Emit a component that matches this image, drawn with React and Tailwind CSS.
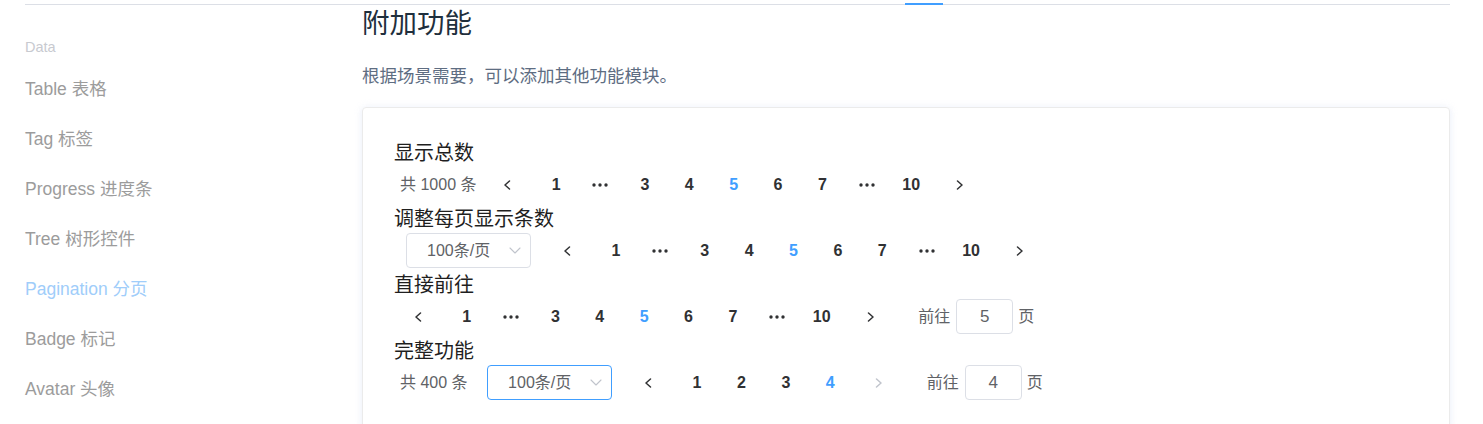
import React from "react";

const FONT = { fontFamily: '"Liberation Sans", "Noto Sans CJK SC", sans-serif' };

function ChevLeft({ color = "#303133" }) {
  return (
    <svg width="8" height="10" viewBox="0 0 8 10" fill="none">
      <polyline points="6.5,1 2,5 6.5,9" stroke={color} strokeWidth="1.5" strokeLinecap="round" strokeLinejoin="round" />
    </svg>
  );
}
function ChevRight({ color = "#303133" }) {
  return (
    <svg width="8" height="10" viewBox="0 0 8 10" fill="none">
      <polyline points="1.5,1 6,5 1.5,9" stroke={color} strokeWidth="1.5" strokeLinecap="round" strokeLinejoin="round" />
    </svg>
  );
}
function ChevDown() {
  return (
    <svg width="12" height="7" viewBox="0 0 12 7" fill="none">
      <polyline points="1,1 6,6 11,1" stroke="#c0c4cc" strokeWidth="1.1" strokeLinecap="round" strokeLinejoin="round" />
    </svg>
  );
}
function Dots() {
  return (
    <svg width="16" height="4" viewBox="0 0 16 4">
      <circle cx="2" cy="2" r="1.7" fill="#303133" />
      <circle cx="8" cy="2" r="1.7" fill="#303133" />
      <circle cx="14" cy="2" r="1.7" fill="#303133" />
    </svg>
  );
}

function Prev({ disabled }) {
  return (
    <div className="flex h-[35px] w-[44.4px] shrink-0 items-center justify-center pr-[9px]">
      <ChevLeft color={disabled ? "#c0c4cc" : "#303133"} />
    </div>
  );
}
function Next({ disabled }) {
  return (
    <div className="flex h-[35px] w-[44.4px] shrink-0 items-center justify-center pl-[9px]">
      <ChevRight color={disabled ? "#c0c4cc" : "#303133"} />
    </div>
  );
}

function Pager({ items, active }) {
  return (
    <div className="flex">
      {items.map((it, i) => (
        <div
          key={i}
          className={
            "flex h-[35px] w-[44.4px] shrink-0 items-center justify-center text-[16px] font-bold " +
            (it === active ? "text-[#409eff]" : "text-[#303133]")
          }
        >
          {it === "..." ? <Dots /> : it}
        </div>
      ))}
    </div>
  );
}

function SizeSelect({ focused }) {
  return (
    <div
      className={
        "flex h-[35px] w-[125px] shrink-0 items-center justify-between rounded-[4px] border pl-[20px] pr-[9px] text-[16px] text-[#606266] " +
        (focused ? "border-[#409eff]" : "border-[#dcdfe6]")
      }
    >
      <span>100条/页</span>
      <ChevDown />
    </div>
  );
}

function Jump({ value }) {
  return (
    <div className="ml-[30px] flex items-center text-[16px] text-[#606266]">
      <span>前往</span>
      <div className="ml-[6px] flex h-[35px] w-[57px] items-center justify-center rounded-[4px] border border-[#dcdfe6] text-[17px]">
        {value}
      </div>
      <span className="ml-[5px]">页</span>
    </div>
  );
}

const big = [1, "...", 3, 4, 5, 6, 7, "...", 10];

function Title({ children }) {
  return <div className="h-[31px] pt-[3px] text-[20px] leading-[28px] text-[#1f1f1f]">{children}</div>;
}

export default function App() {
  const nav = [
    "Table 表格",
    "Tag 标签",
    "Progress 进度条",
    "Tree 树形控件",
    "Pagination 分页",
    "Badge 标记",
    "Avatar 头像",
  ];
  return (
    <div className="h-[424px] w-[1483px] overflow-hidden bg-white" style={FONT}>
      <div className="relative ml-[25px] mt-[4px] h-[1px] w-[1425px] bg-[#dcdfe6]">
        <div className="absolute left-[880px] top-[-1px] h-[2px] w-[38px] bg-[#409eff]" />
      </div>
      <div className="flex">
        <div className="w-[362px] shrink-0 pl-[25px] pt-[29px]">
          <div className="mb-[4px] h-[26px] text-[14.5px] leading-[26px] text-[#c8cad0]">Data</div>
          {nav.map((n) => (
            <div
              key={n}
              className={
                "flex h-[50px] items-center text-[17.5px] " +
                (n.startsWith("Pagination") ? "text-[#a0cdfa]" : "text-[#9c9c9c]")
              }
            >
              {n}
            </div>
          ))}
        </div>
        <div className="flex-1">
          <div className="h-[36px] pt-[1px] text-[27.5px] leading-[36px] text-[#1f2f3d]">附加功能</div>
          <div className="mt-[22px] h-[26px] text-[17.5px] leading-[26px] text-[#5e6d82]">
            根据场景需要，可以添加其他功能模块。
          </div>
          <div className="mt-[18px] w-[1088px] rounded-[4px] border border-[#ebebeb] pb-[30px] pl-[31px] pt-[28px] shadow-[0_0_8px_0_rgba(232,237,250,0.6),0_2px_4px_0_rgba(232,237,250,0.5)]">
            <Title>显示总数</Title>
            <div className="flex h-[35px] items-center pl-[6px]">
              <span className="mr-[13px] text-[16px] text-[#606266]">共 1000 条</span>
              <Prev />
              <Pager items={big} active={5} />
              <Next />
            </div>
            <Title>调整每页显示条数</Title>
            <div className="flex h-[35px] items-center pl-[12px]">
              <SizeSelect />
              <div className="w-[18.4px] shrink-0" />
              <Prev />
              <Pager items={big} active={5} />
              <Next />
            </div>
            <Title>直接前往</Title>
            <div className="flex h-[35px] items-center pl-[6px]">
              <Prev />
              <Pager items={big} active={5} />
              <Next />
              <Jump value="5" />
            </div>
            <Title>完整功能</Title>
            <div className="flex h-[35px] items-center pl-[6px]">
              <span className="mr-[19.5px] text-[16px] text-[#606266]">共 400 条</span>
              <SizeSelect focused />
              <div className="w-[18.4px] shrink-0" />
              <Prev />
              <Pager items={[1, 2, 3, 4]} active={4} />
              <Next disabled />
              <Jump value="4" />
            </div>
          </div>
        </div>
      </div>
    </div>
  );
}
